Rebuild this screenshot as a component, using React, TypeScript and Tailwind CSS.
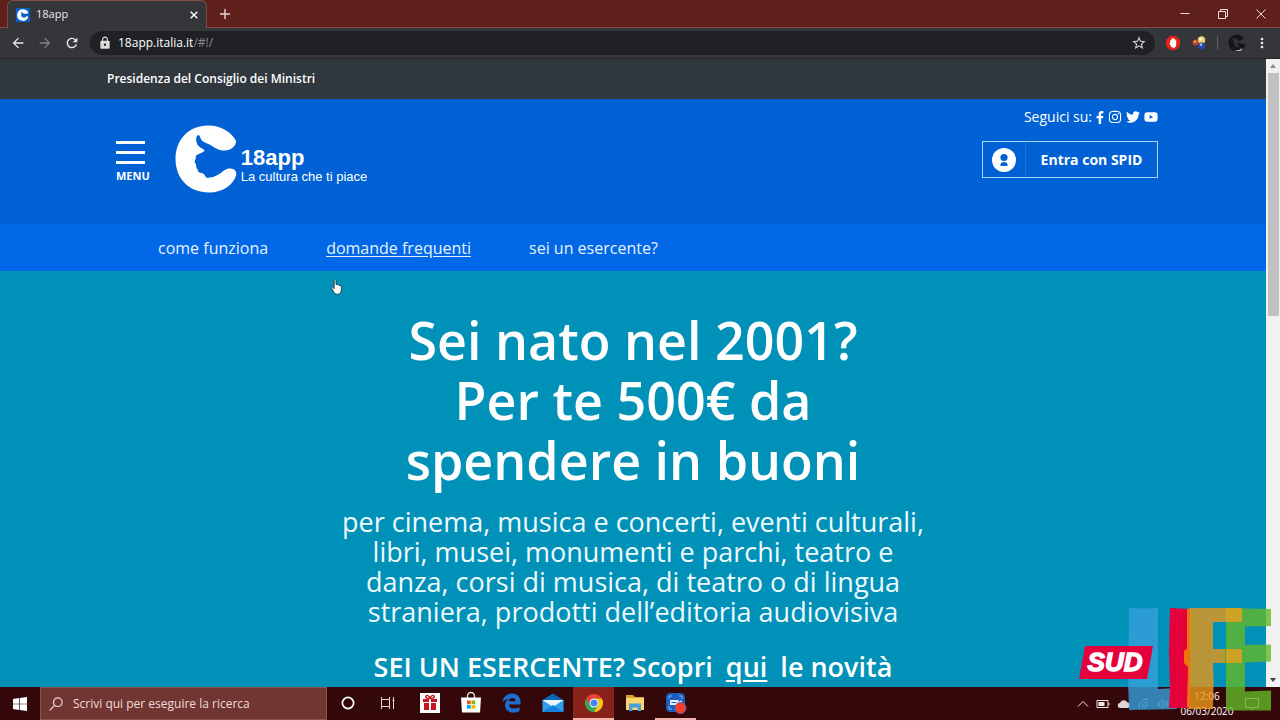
import React from "react";
import { FaFacebookF, FaInstagram, FaTwitter, FaYoutube } from "react-icons/fa";
import { MdArrowBack, MdArrowForward, MdRefresh, MdLock, MdStarBorder, MdMoreVert } from "react-icons/md";

function AppFavicon() {
  return (
    <svg viewBox="0 0 14 14" className="h-3.5 w-3.5" aria-hidden="true">
      <rect width="14" height="14" fill="#0b5fc4" />
      <path d="M12.2 4.2C11 2 9 1.2 7 1.2a5.8 5.8 0 1 0 5.2 8.4c.2-1-1-1.800-2-1.200C9 10 6.500 10 5.600 8.400c-.6-1-.8-1.800 0-3L5.200 3.400 7.500 5.400c1 .8 1.600.2 2.600.4 1 .2 2.300-.4 2.100-1.600z" fill="#fff" />
    </svg>
  );
}

function WindowButtons() {
  return (
    <div className="ml-auto flex items-center text-[#eed9d6]">
      <button aria-label="Riduci a icona" className="grid h-6 w-[38px] place-items-center">
        <svg viewBox="0 0 10 10" className="h-2.5 w-2.5"><path d="M0.500 4.500h9" stroke="currentColor" /></svg>
      </button>
      <button aria-label="Ripristina" className="grid h-6 w-[38px] place-items-center">
        <svg viewBox="0 0 10 10" className="h-2.5 w-2.5" fill="none" stroke="currentColor"><path d="M.5 2.500h7v7h-7zM2.500 2.500v-2h7v7h-2" /></svg>
      </button>
      <button aria-label="Chiudi" className="grid h-6 w-[38px] place-items-center">
        <svg viewBox="0 0 10 10" className="h-2.5 w-2.5" stroke="currentColor"><path d="M.5.5l9 9M9.500.5l-9 9" /></svg>
      </button>
    </div>
  );
}

function BrowserChrome() {
  return (
    <header className="shrink-0 font-['Open_Sans','Noto_Sans',sans-serif]">
      <div className="flex h-7 border-b border-[#7d4b48] bg-[#5f1f1a]">
        <div className="-mb-px ml-[7px] flex w-[200px] items-center gap-1.5 rounded-t-md border border-b-0 border-[#7d4b48] bg-[#35363a] pr-1 pl-2">
          <AppFavicon />
          <span className="text-[11px] text-[#e8e8e8]">18app</span>
          <button aria-label="Chiudi scheda" className="ml-auto grid h-4 w-4 place-items-center text-white">
            <svg viewBox="0 0 8 8" className="h-2 w-2" stroke="currentColor" strokeWidth="1.4"><path d="M.7.7l6.600 6.600M7.300.7L.7 7.300" /></svg>
          </button>
        </div>
        <button aria-label="Nuova scheda" className="grid w-9 place-items-center text-[#e6d6d4]">
          <svg viewBox="0 0 10 10" className="h-2.5 w-2.5" stroke="currentColor" strokeWidth="1.4"><path d="M5 0v10M0 5h10" /></svg>
        </button>
        <WindowButtons />
      </div>
      <div className="flex h-[31px] items-center border-b border-[#25262a] bg-[#35363a] px-2.5">
        <div className="flex items-center gap-[11px]">
          <button aria-label="Indietro" className="text-[#e8e8e8]"><MdArrowBack className="h-4 w-4" /></button>
          <button aria-label="Avanti" className="text-[#808185]"><MdArrowForward className="h-4 w-4" /></button>
          <button aria-label="Ricarica" className="text-[#e8e8e8]"><MdRefresh className="h-4 w-4" /></button>
        </div>
        <div className="ml-2.5 flex h-6 min-w-0 flex-1 items-center rounded-full bg-[#202124] px-2">
          <MdLock className="mr-1.5 h-3.5 w-3.5 text-[#dcdcdc]" />
          <input aria-label="Indirizzo" defaultValue="18app.italia.it" className="bg-transparent text-[12px] text-white outline-none [field-sizing:content]" />
          <span className="text-[12px] text-[#85868a]">/#!/</span>
          <button aria-label="Aggiungi ai preferiti" className="ml-auto text-[#d6d6d6]"><MdStarBorder className="h-4 w-4" /></button>
        </div>
        <button aria-label="AdBlock" className="ml-2.5">
          <svg viewBox="0 0 16 16" className="h-4 w-4">
            <path d="M5 1h6l4 4v6l-4 4H5l-4-4V5z" fill="#e2231a" />
            <path d="M5.200 8V5.200h1.100V3.800h1.300V3h1.300v.9h1.200v1.300h1.100v4.500c0 2-1.200 3.100-2.700 3.100-1.600 0-2.600-.9-3.300-2.700L4.500 8z" fill="#fff" />
          </svg>
        </button>
        <button aria-label="Estensione" className="ml-2.5">
          <svg viewBox="0 0 16 16" className="h-4 w-4">
            <circle cx="10.500" cy="5" r="3.800" fill="#e7cf6d" /><circle cx="9.800" cy="4" r="1.500" fill="#fff8d8" />
            <circle cx="10.500" cy="11" r="3.600" fill="#2749a6" /><circle cx="10" cy="9.800" r="1.300" fill="#9fb8f0" />
            <circle cx="4.500" cy="7.500" r="3" fill="#c2452e" /><circle cx="4" cy="6.700" r="1.100" fill="#f3b5a2" />
          </svg>
        </button>
        <span className="mx-2.5 h-3.5 w-px bg-[#606166]" />
        <button aria-label="Profilo">
          <svg viewBox="0 0 20 20" className="h-[18px] w-[18px]">
            <circle cx="10" cy="10" r="9.500" fill="#141517" />
            <path d="M12 8l8-4v8l-7-2z" fill="#35363a" />
            <path d="M5 4l6 2 2 3-3 2 4 4-6-1z" fill="#303236" />
            <path d="M7 17.500q5 1.500 9-2l-1 2.500q-4 2-8-.5z" fill="#d8d8d8" />
          </svg>
        </button>
        <button aria-label="Menu del browser" className="ml-2 text-[#ececec]"><MdMoreVert className="h-4 w-4" /></button>
      </div>
    </header>
  );
}

function SiteLogo() {
  return (
    <a href="#home" className="flex items-start text-white">
      <svg viewBox="0 0 62 68" className="h-[68px] w-[62px]" aria-hidden="true">
        <path
          d="M33 .5C47 .5 57 8 60.800 15.500C62 20.500 56 25.500 49.500 25.500C44 25.500 41 23.500 37 21C32 17.500 27 18 25.200 12.500C24.800 11 24 9.800 23 10.200C20.800 11.500 20.800 15 22 18.500C23.300 22 27 23 29.800 25.500C28 28 23 28.500 20.500 31C21.800 33.500 19.300 35 19.800 37.500C21.500 39 21 41.500 21.800 43.500C23.500 45 22.500 47.500 25.500 47.800C29.500 48.200 29.500 50.500 31.500 52.800C36 53 41 51.500 45 48.500C49 45.500 51 43.500 55.500 43.500C59.500 43.500 62 46.500 61.200 50C58.500 59.500 48.500 67.500 34 67.500C14 67.500 .5 53.500 .5 34S14 .5 33 .5z"
          fill="#fff"
        />
      </svg>
      <span className="mt-[22px] ml-1 flex flex-col font-['Liberation_Sans',Arial,sans-serif]">
        <span className="text-[22px] leading-[22px] font-bold">18app</span>
        <span className="text-[13px] leading-4">La cultura che ti piace</span>
      </span>
    </a>
  );
}

function SiteHeader() {
  return (
    <div className="bg-[#0061d5]">
      <div className="mx-auto flex h-[125px] max-w-[1052px] items-start justify-between">
        <div className="flex items-start gap-[25px] pt-[26px] pl-[9px]">
          <button className="mt-4 flex flex-col items-start text-white">
            <span className="flex w-[29px] flex-col gap-[7px]">
              <span className="h-[3px] bg-white" />
              <span className="h-[3px] bg-white" />
              <span className="h-[3px] bg-white" />
            </span>
            <span className="mt-1.5 text-[11px] leading-3 font-bold">MENU</span>
          </button>
          <SiteLogo />
        </div>
        <div className="flex flex-col items-end pr-px text-white">
          <div className="mt-[9px] flex items-center gap-1">
            <span className="text-[14px] leading-[18px]">Seguici su:</span>
            <a href="#facebook" aria-label="Facebook"><FaFacebookF className="h-[13px] w-2" /></a>
            <a href="#instagram" aria-label="Instagram"><FaInstagram className="h-3.5 w-3.5" /></a>
            <a href="#twitter" aria-label="Twitter"><FaTwitter className="h-3.5 w-3.5" /></a>
            <a href="#youtube" aria-label="YouTube"><FaYoutube className="h-3.5 w-3.5" /></a>
          </div>
          <button className="mt-[15px] flex h-[37px] w-44 items-center border border-[#a9d3ff]">
            <span className="grid h-full w-[43px] place-items-center border-r border-[#1a72dc]">
              <svg viewBox="0 0 24 24" className="h-6 w-6" aria-hidden="true">
                <circle cx="12" cy="12" r="12" fill="#fff" />
                <circle cx="12" cy="9.500" r="3.600" fill="#0061d5" />
                <path d="M8.500 18v-1.500c0-1.500 1.500-2.500 3.500-2.500s3.500 1 3.500 2.500V18z" fill="#0061d5" />
              </svg>
            </span>
            <span className="flex-1 text-center text-[14px] font-bold">Entra con SPID</span>
          </button>
        </div>
      </div>
    </div>
  );
}

function HandCursor() {
  return (
    <svg viewBox="0 0 11 16" className="absolute top-[43px] left-[5px] h-4 w-[11px]" aria-hidden="true">
      <path d="M3.200 1.500c0-1.300 1.800-1.300 1.800 0v4l1-.3.600.7 1-.2.600.8 1-.1c.6 0 1.100.5 1.100 1.200v3.200c0 2.500-1.300 4.500-3.800 4.500-2 0-3-.9-3.800-2.500L.7 9.200C.3 8 1.600 7.500 2.300 8.500l.9 1.200z" fill="#fff" stroke="#1b2a33" strokeWidth=".8" />
    </svg>
  );
}

function SiteNav() {
  return (
    <nav className="bg-[#0067e6]">
      <ul className="mx-auto flex h-[47px] max-w-[1052px] items-center gap-[58px] pl-[51px] text-[16px] text-[#e6f3ff]">
        <li><a href="#come-funziona">come funziona</a></li>
        <li className="relative">
          <a href="#domande" className="underline underline-offset-2">domande frequenti</a>
          <HandCursor />
        </li>
        <li><a href="#esercente">sei un esercente?</a></li>
      </ul>
    </nav>
  );
}

function Hero() {
  return (
    <section className="bg-[#0091b8] px-4 pt-[39px] pb-40 text-center text-white">
      <h1 className="text-[52px] leading-[60px] font-semibold">
        Sei nato nel 2001?<br />Per te 500€ da<br />spendere in buoni
      </h1>
      <p className="mt-[17px] text-[27px] leading-[30px] text-[#eefaff]">
        per cinema, musica e concerti, eventi culturali,<br />
        libri, musei, monumenti e parchi, teatro e<br />
        danza, corsi di musica, di teatro o di lingua<br />
        straniera, prodotti dell’editoria audiovisiva
      </p>
      <p className="mt-[25px] text-[27px] leading-[30px] font-semibold">
        SEI UN ESERCENTE? Scopri <a href="#novita" className="mx-1.5 underline underline-offset-3">qui</a> le novità
      </p>
    </section>
  );
}

function Scrollbar() {
  return (
    <div className="flex w-3.5 shrink-0 flex-col items-center bg-[#f1f1f1]" aria-hidden="true">
      <span className="grid h-3.5 place-items-center">
        <svg viewBox="0 0 6 4" className="h-1 w-1.5"><path d="M0 4l3-4 3 4z" fill="#8a8a8a" /></svg>
      </span>
      <span className="h-[243px] w-[11px] bg-[#c1c1c1]" />
      <span className="mt-auto grid h-3.5 place-items-center">
        <svg viewBox="0 0 6 4" className="h-1 w-1.5"><path d="M0 0l3 4 3-4z" fill="#404040" /></svg>
      </span>
    </div>
  );
}

const apps: { label: string; state?: "active" | "open"; icon: React.ReactNode }[] = [
  { label: "Cortana", icon: <circle cx="12" cy="12" r="5.600" fill="none" stroke="#fff" strokeWidth="1.700" /> },
  {
    label: "Visualizzazione attività",
    icon: <path d="M4.500 6v2.500h8V6M4.500 18v-2.500h8V18M4.500 8.500v7h8v-7zM16.500 6v12M15.500 9.500h2" fill="none" stroke="#e8d9d9" />,
  },
  {
    label: "Regali",
    icon: (
      <>
        <rect x="2" y="2" width="20" height="20" fill="#fff" />
        <path d="M5 8h6v3H5zM13 8h6v3h-6zM6 12h5v7H6zM13 12h5v7h-5z" fill="#c4161c" />
        <path d="M12 7.500C9 7.500 7 6.500 8 5s3.500 0 4 2.500C12.500 5 15 3.500 16 5s-1 2.500-4 2.500z" fill="none" stroke="#c4161c" strokeWidth="1.400" />
      </>
    ),
  },
  {
    label: "Microsoft Store",
    icon: (
      <>
        <path d="M8.500 7V5a3.500 3.500 0 0 1 7 0v2" fill="none" stroke="#e6e6e6" strokeWidth="1.300" />
        <path d="M2 6.500h20l-1 15H3z" fill="#fff" />
        <path d="M8 9.500h3.700v3.700H8z" fill="#f25022" /><path d="M12.500 9.500h3.700v3.700h-3.700z" fill="#7fba00" />
        <path d="M8 14h3.700v3.700H8z" fill="#00a4ef" /><path d="M12.500 14h3.700v3.700h-3.700z" fill="#ffb900" />
      </>
    ),
  },
  {
    label: "Microsoft Edge",
    icon: (
      <path d="M2.500 11.500C3 6 7 2.500 12 2.500c5.500 0 8.500 4 8.500 8.500v2.500H9c.2 3 2.500 4 5 4 2 0 3.800-.5 5.500-1.500v4c-1.700 1-3.800 1.500-6 1.500-5.500 0-8.500-2.800-8.500-7.200 0-3 1.600-5.200 4-6.400-3 0-5 1.400-6.500 3.600zM9 10.200h6.500C15.500 8 14.500 7 12.500 7S9.300 8.200 9 10.200z" fill="#1b6fd0" fillRule="evenodd" />
    ),
  },
  {
    label: "Posta",
    icon: (
      <>
        <path d="M1.500 9L12 2.500 22.500 9v3h-21z" fill="#0a66b8" />
        <path d="M1.500 9h21v12h-21z" fill="#2f9df0" />
        <path d="M1.500 9h21L12 16z" fill="#e9f5ff" /><path d="M1.500 21L12 14l10.500 7z" fill="#1382dc" />
      </>
    ),
  },
  {
    label: "Google Chrome",
    state: "active",
    icon: (
      <>
        <path d="M12 3a9 9 0 0 0-7.800 4.500L8 14.300 12 7.500h7.800A9 9 0 0 0 12 3z" fill="#ea4335" />
        <path d="M4.200 7.500A9 9 0 0 0 12 21l3.900-6.800H8z" fill="#34a853" />
        <path d="M19.800 7.500H12l3.900 6.700L12 21a9 9 0 0 0 7.800-13.500z" fill="#fbc116" />
        <circle cx="12" cy="12" r="4.500" fill="#fff" /><circle cx="12" cy="12" r="3.500" fill="#4285f4" />
      </>
    ),
  },
  {
    label: "Esplora file",
    icon: (
      <>
        <path d="M3 4h7l2 2h9v4H3z" fill="#d9a132" />
        <path d="M3 7h18v12H3z" fill="#fbd66c" />
        <path d="M6 12.500h12V20h-3.500v-3.500h-5V20H6z" fill="#4aa0d8" />
      </>
    ),
  },
  {
    label: "Registratore schermo",
    state: "open",
    icon: (
      <>
        <rect x="2" y="2" width="19" height="19" rx="4.500" fill="#1a5fbf" />
        <path d="M5 8V5h3M18 8V5h-3M5 15v3h3" fill="none" stroke="#7fb4f5" />
        <path d="M6 9h8.500v5H6zM14.500 11l3-2v5l-3-1.500z" fill="#e8f1ff" /><path d="M7.500 11.500h5" stroke="#1a5fbf" />
        <circle cx="16.500" cy="17" r="5.500" fill="#f0402a" stroke="#7d5aa0" />
      </>
    ),
  },
];

const stateClasses = {
  idle: "border-transparent",
  active: "border-[#f2b3ad] bg-[#86221a]",
  open: "border-[#f2b3ad]",
};

function Taskbar() {
  return (
    <footer className="flex h-[33px] shrink-0 items-stretch bg-[#340808] font-['Open_Sans','Noto_Sans',sans-serif]">
      <button aria-label="Start" className="grid w-10 place-items-center">
        <svg viewBox="0 0 14 14" className="h-3.5 w-3.5"><path d="M0 2l6-.9v5.600H0zM6.700 1L14 0v6.700H6.700zM0 7.300h6v5.600L0 12zM6.700 7.300H14V14l-7.300-1z" fill="#fff" /></svg>
      </button>
      <label className="flex w-[287px] items-center border border-[#8a5350] bg-[#713632] pl-2 text-[#efdcda]">
        <svg viewBox="0 0 14 14" className="mr-2.5 h-3.5 w-3.5" fill="none" stroke="currentColor" strokeWidth="1.200" aria-hidden="true"><circle cx="8.800" cy="5.200" r="4.300" /><path d="M5.700 8.300L.6 13.400" /></svg>
        <input aria-label="Cerca" placeholder="Scrivi qui per eseguire la ricerca" className="min-w-0 flex-1 bg-transparent text-[12px] outline-none placeholder:text-[#efdcda]" />
      </label>
      <div className="flex">
        {apps.map((app) => (
          <button key={app.label} aria-label={app.label} className={`grid w-[41px] place-items-center border-b-2 ${stateClasses[app.state ?? "idle"]}`}>
            <svg viewBox="0 0 24 24" className="h-6 w-6">{app.icon}</svg>
          </button>
        ))}
      </div>
      <div className="ml-auto flex items-center gap-[7px] pr-[21px] text-[#f3e8e8]">
        <svg viewBox="0 0 12 12" className="h-3 w-3" fill="none" stroke="currentColor"><path d="M1 8.500l5-5 5 5" /></svg>
        <svg viewBox="0 0 14 12" className="h-3 w-3.5"><path d="M1 2.500h11v7H1zM13 5v2" fill="none" stroke="currentColor" /><path d="M2.500 4h6v4h-6z" fill="currentColor" /></svg>
        <svg viewBox="0 0 14 12" className="h-3 w-3.5"><path d="M3.500 10A2.500 2.500 0 0 1 3 5a4 4 0 0 1 7.300-.7A3 3 0 0 1 11 10z" fill="#dcd6d6" /></svg>
        <svg viewBox="0 0 12 12" className="h-3 w-3" fill="none" stroke="currentColor" strokeWidth=".8"><path d="M1 10A9 9 0 0 1 10 1M4 10a6 6 0 0 1 6-6M7 10a3 3 0 0 1 3-3" /></svg>
        <svg viewBox="0 0 12 12" className="h-3 w-3" fill="none" stroke="currentColor" strokeWidth=".8"><path d="M1 4.500h2l3-3v9l-3-3H1zM8 4q1.500 2 0 4M9.500 2.500q3 3.500 0 7" /></svg>
        <div className="flex w-[62px] flex-col items-center text-[10px] leading-[15px] text-white"><span>12:06</span><span>06/03/2020</span></div>
        <svg viewBox="0 0 14 14" className="h-3.5 w-3.5" fill="none" stroke="currentColor"><path d="M.5 1.500h13v9H9l-2 2v-2H.5z" /></svg>
      </div>
    </footer>
  );
}

function ChannelBadge() {
  return (
    <svg viewBox="0 0 193 104" className="pointer-events-none absolute right-2 bottom-[9px] h-[104px] w-[193px]" role="img" aria-label="SUD LIFE">
      <g opacity=".8">
        <path d="M50 1l14 .5L79 1v81l19-1v21l-22 .6-26 .4-1-30z" fill="#36a0dc" />
        <path d="M110 1h53v14h-29v27h29v14h-29l.6 20-.6 26h-24l-3-3 1-40-4-1V44l4-1z" fill="#ea981a" />
        <path d="M147 1l45 1v17l-26 .6V38l26-.5v17l-26 1v29l26-1v20h-45V56h-1V42h1V15z" fill="#64b828" />
        <path d="M147 1h16v14h-16zM147 42h16v14h-16z" fill="#ffa800" />
      </g>
      <path d="M91 1l19 1v41l-3 2v12l3 3v41H90l1-18-1-40z" fill="#e4003a" />
      <path d="M108 2h3v98h-3l1-40-4-4V44l3-2z" fill="#ee7408" />
      <path d="M6 39h68l-6 33H0z" fill="#e5003c" />
      <text x="36" y="64" textAnchor="middle" fill="#fff" stroke="#fff" strokeWidth="1.400" fontFamily="Liberation Sans, Arial, sans-serif" fontSize="26" fontWeight="700" fontStyle="italic">SUD</text>
    </svg>
  );
}

export default function App() {
  return (
    <div className="relative flex h-screen flex-col overflow-hidden">
      <BrowserChrome />
      <div className="flex min-h-0 flex-1">
        <main className="min-w-0 flex-1 overflow-hidden bg-[#0091b8] font-['Open_Sans','Noto_Sans',sans-serif]">
          <div className="bg-[#30373d]">
            <p className="mx-auto max-w-[1052px] text-[12px] leading-10 font-semibold text-white">Presidenza del Consiglio dei Ministri</p>
          </div>
          <SiteHeader />
          <SiteNav />
          <Hero />
        </main>
        <Scrollbar />
      </div>
      <Taskbar />
      <ChannelBadge />
    </div>
  );
}
